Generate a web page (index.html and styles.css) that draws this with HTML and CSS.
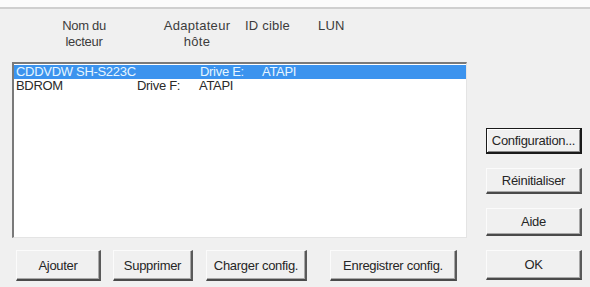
FILE: index.html
```html
<!DOCTYPE html>
<html lang="fr">
<head>
<meta charset="utf-8">
<title>Lecteurs</title>
<link rel="stylesheet" href="styles.css">
</head>
<body>
<div class="topbar"></div>
<div class="dialog">
  <div class="left">
    <div class="headers">
      <div class="hd hd-name">Nom du<br>lecteur</div>
      <div class="hd hd-adapter">Adaptateur<br>hôte</div>
      <div class="hd hd-id">ID cible</div>
      <div class="hd hd-lun">LUN</div>
    </div>
    <div class="listbox">
      <div class="row selected">
        <span class="cell name-a">CDDVDW SH-S223C</span>
        <span class="cell drive">Drive E:</span>
        <span class="cell">ATAPI</span>
      </div>
      <div class="row">
        <span class="cell name-b">BDROM</span>
        <span class="cell drive">Drive F:</span>
        <span class="cell">ATAPI</span>
      </div>
    </div>
    <div class="bottom-buttons">
      <button class="btn b-add">Ajouter</button>
      <button class="btn b-del">Supprimer</button>
      <button class="btn b-load">Charger config.</button>
      <button class="btn b-save">Enregistrer config.</button>
    </div>
  </div>
  <div class="right">
    <button class="btn side focus">Configuration...</button>
    <button class="btn side">Réinitialiser</button>
    <button class="btn side b-help">Aide</button>
    <button class="btn side b-ok">OK</button>
  </div>
</div>
</body>
</html>
```

FILE: styles.css
```css
html, body {
  margin: 0;
  padding: 0;
}
body {
  width: 590px;
  height: 287px;
  background: #f0f0f0;
  font-family: "Liberation Sans", Arial, sans-serif;
  font-size: 13px;
  color: #333;
  overflow: hidden;
}
.topbar {
  height: 7px;
  background: #fbfbfb;
  border-bottom: 2px solid #cfcfcf;
}
.dialog {
  display: flex;
  padding-left: 12px;
}
.left {
  width: 455px;
  display: flex;
  flex-direction: column;
}
.headers {
  height: 53px;
  display: flex;
  align-items: flex-start;
  padding-top: 9px;
  box-sizing: border-box;
  color: #3c3c3c;
  line-height: 16px;
  letter-spacing: -0.3px;
}
.hd {
  text-align: center;
}
.hd-name {
  width: 70px;
  margin-left: 37px;
}
.hd-adapter {
  width: 84px;
  margin-left: 36px;
  letter-spacing: 0.3px;
}
.hd-id {
  margin-left: 6px;
  letter-spacing: 0.2px;
}
.hd-lun {
  margin-left: 28px;
  letter-spacing: 0.2px;
}
.listbox {
  height: 176px;
  background: #fff;
  border-top: 2px solid #7a7a7a;
  border-left: 2px solid #7a7a7a;
  border-right: 1px solid #e4e4e4;
  border-bottom: 1px solid #e4e4e4;
  box-sizing: border-box;
  padding-top: 1px;
  letter-spacing: -0.3px;
}
.row {
  height: 14px;
  line-height: 14px;
  display: flex;
  padding-left: 2px;
  color: #2a2a2a;
}
.row.selected {
  background: #3b93ee;
  color: #e6f6ff;
}
.cell {
  white-space: nowrap;
}
.name-a { width: 184px; }
.name-b { width: 121px; }
.drive { width: 62px; }
.bottom-buttons {
  display: flex;
  margin-top: 12px;
}
.btn {
  font-family: inherit;
  font-size: 13px;
  letter-spacing: -0.3px;
  color: #262626;
  background: #f0f0f0;
  border-style: solid;
  border-width: 1px 2px 2px 1px;
  border-color: #fbfbfb #5a5a5a #4a4a4a #fbfbfb;
  box-shadow: inset -1px -1px 0 #a8a8a8;
  padding: 0;
  height: 31px;
  margin: 0;
}
.b-add { width: 85px; margin-left: 4px; }
.b-del { width: 80px; margin-left: 12px; }
.b-load { width: 101px; margin-left: 13px; }
.b-save { width: 127px; margin-left: 23px; }
.right {
  display: flex;
  flex-direction: column;
  margin-left: 19px;
  padding-top: 119px;
}
.side {
  width: 96px;
  height: 26px;
}
.side + .side {
  margin-top: 14px;
}
.focus {
  border: 1px solid #1a1a1a;
  border-right-width: 2px;
  border-bottom-width: 2px;
  box-shadow: inset 1px 1px 0 #fff, inset -1px -1px 0 #8a8a8a;
}
.b-help { height: 28px; }
.b-ok { height: 30px; }
```
